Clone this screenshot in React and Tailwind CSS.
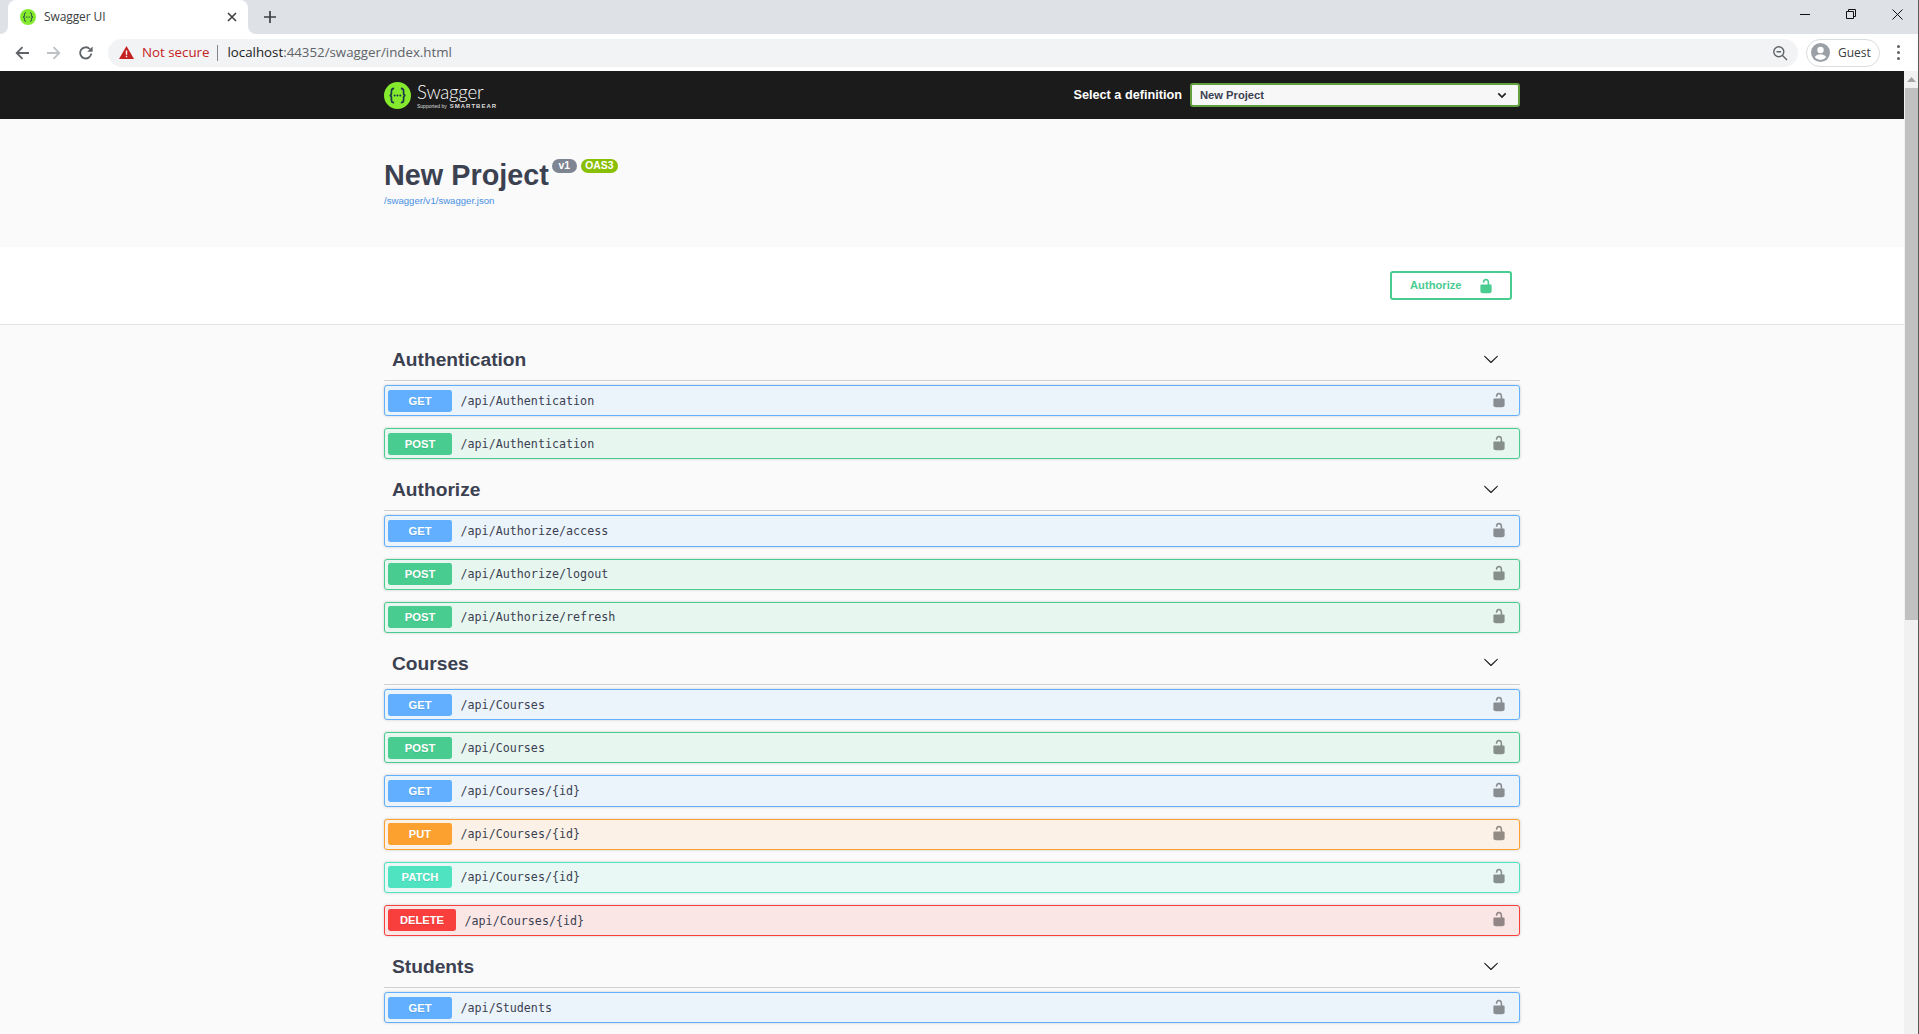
import React from "react";

const LOCK = "M15.8 8H14V5.6C14 2.703 12.665 1 10 1 7.334 1 6 2.703 6 5.6V6h2v-.801C8 3.754 8.797 3 10 3c1.203 0 2 .754 2 2.199V8H4c-.553 0-1 .646-1 1.199V17c0 .549.428 1.139.951 1.307l1.197.387C5.672 18.861 6.55 19 7.1 19h5.8c.549 0 1.428-.139 1.951-.307l1.196-.387c.524-.167.953-.757.953-1.306V9.199C17 8.646 16.352 8 15.8 8z";
const CHEVRON = "M17.418 6.109c.272-.268.709-.268.979 0s.271.701 0 .969l-7.908 7.83c-.27.268-.707.268-.979 0l-7.908-7.83c-.27-.268-.27-.701 0-.969.271-.268.709-.268.979 0L10 13.25l7.418-7.141z";

const styles = {
  GET: { row: "bg-[#ebf3fb] border-[#61affe]", badge: "bg-[#61affe] w-[64px]" },
  POST: { row: "bg-[#e8f6f0] border-[#49cc90]", badge: "bg-[#49cc90] w-[64px]" },
  PUT: { row: "bg-[#fbf1e6] border-[#fca130]", badge: "bg-[#fca130] w-[64px]" },
  PATCH: { row: "bg-[#e9f8f5] border-[#50e3c2]", badge: "bg-[#50e3c2] w-[64px]" },
  DELETE: { row: "bg-[#fbe6e6] border-[#f93e3e]", badge: "bg-[#f93e3e] w-[68px]" },
};

const groups = [
  { name: "Authentication", ops: [["GET", "/api/Authentication"], ["POST", "/api/Authentication"]] },
  { name: "Authorize", ops: [["GET", "/api/Authorize/access"], ["POST", "/api/Authorize/logout"], ["POST", "/api/Authorize/refresh"]] },
  { name: "Courses", ops: [["GET", "/api/Courses"], ["POST", "/api/Courses"], ["GET", "/api/Courses/{id}"], ["PUT", "/api/Courses/{id}"], ["PATCH", "/api/Courses/{id}"], ["DELETE", "/api/Courses/{id}"]] },
  { name: "Students", ops: [["GET", "/api/Students"]] },
];

function Favicon({ size, cls }) {
  return (
    <svg width={size} height={size} viewBox="0 0 32 32" className={cls}>
      <circle cx="16" cy="16" r="16" fill="#85ea2d" />
      <path d="M12 7.5c-2.5 0-3.2 1.2-3.2 3.2v2.6c0 1.6-.8 2.7-2.3 2.7 1.5 0 2.3 1.1 2.3 2.7v2.6c0 2 .7 3.2 3.2 3.2M20 7.5c2.5 0 3.2 1.2 3.2 3.2v2.6c0 1.6.8 2.7 2.3 2.7-1.5 0-2.3 1.1-2.3 2.7v2.6c0 2-.7 3.2-3.2 3.2" fill="none" stroke="#173647" strokeWidth="2" />
      <circle cx="12.6" cy="16" r="1.2" fill="#173647" />
      <circle cx="16" cy="16" r="1.2" fill="#173647" />
      <circle cx="19.4" cy="16" r="1.2" fill="#173647" />
    </svg>
  );
}

function TabBar() {
  return (
    <div className="h-[34px] bg-[#dee1e6] flex items-end relative shrink-0">
      <div className="w-2 h-2 bg-white self-end">
        <div className="w-2 h-2 bg-[#dee1e6] rounded-br-lg" />
      </div>
      <div className="w-[240px] h-[34px] bg-white rounded-t-lg flex items-center pl-3 pr-[10px]">
        <Favicon size={16} />
        <span className="ml-2 flex-1 text-[12px] text-[#3c4043] font-['Open_Sans',sans-serif] tracking-[-0.1px]">Swagger UI</span>
        <svg width="12" height="12" viewBox="0 0 12 12"><path d="M2 2l8 8M10 2l-8 8" stroke="#3c4043" strokeWidth="1.6" fill="none" /></svg>
      </div>
      <div className="w-2 h-2 bg-white self-end">
        <div className="w-2 h-2 bg-[#dee1e6] rounded-bl-lg" />
      </div>
      <svg width="14" height="14" viewBox="0 0 14 14" className="ml-[7px] mb-[10px]"><path d="M7 1v12M1 7h12" stroke="#3c4043" strokeWidth="1.7" fill="none" /></svg>
      <div className="flex-1" />
      <div className="flex items-center h-[34px] pb-[6px] mr-[15px] gap-[36px]">
        <svg width="10" height="10" viewBox="0 0 10 10"><path d="M0 5.5h10" stroke="#111" strokeWidth="1" fill="none" /></svg>
        <svg width="10" height="10" viewBox="0 0 10 10"><path d="M.5 2.5h7v7h-7zM2.5 2.5v-2h7v7h-2" stroke="#111" strokeWidth="1" fill="none" /></svg>
        <svg width="11" height="11" viewBox="0 0 11 11"><path d="M.5.5l10 10M10.5.5l-10 10" stroke="#111" strokeWidth="1" fill="none" /></svg>
      </div>
    </div>
  );
}

function Toolbar() {
  return (
    <div className="h-[37px] bg-white flex items-center shrink-0 pl-[15px] pr-[15px] font-['Open_Sans',sans-serif]">
      <svg width="14" height="14" viewBox="0 0 14 14"><path d="M14 7H2M7.5 1.2L1.7 7l5.8 5.8" stroke="#5f6368" strokeWidth="1.8" fill="none" /></svg>
      <svg width="14" height="14" viewBox="0 0 14 14" className="ml-[18px]"><path d="M0 7h12M6.5 1.2L12.3 7l-5.8 5.8" stroke="#bdc1c6" strokeWidth="1.8" fill="none" /></svg>
      <svg width="16" height="16" viewBox="0 0 16 16" className="ml-[17px]"><path d="M13.3 8.5A5.6 5.6 0 1 1 11.8 4" stroke="#5f6368" strokeWidth="1.8" fill="none" /><path d="M14.6 1.4v5.4H9.2z" fill="#5f6368" /></svg>
      <div className="ml-[14px] w-[1690px] h-[28px] rounded-full bg-[#f1f3f4] flex items-center pl-[11px] pr-[10px]">
        <svg width="15" height="13" viewBox="0 0 15 13"><path d="M7.5 0L15 13H0z" fill="#c5221f" /><path d="M6.8 4.5h1.4v4.3H6.8zM6.8 9.8h1.4v1.4H6.8z" fill="#fff" /></svg>
        <span className="ml-[8px] text-[13.3px] text-[#c5221f] leading-none">Not secure</span>
        <span className="ml-[8px] w-px h-[16px] bg-[#80868b]" />
        <span className="ml-[9px] text-[13.3px] leading-none text-[#202124]">localhost<span className="text-[#5f6368]">:44352/swagger/index.html</span></span>
        <span className="flex-1" />
        <svg width="16" height="16" viewBox="0 0 16 16"><circle cx="6.8" cy="6.8" r="5" stroke="#5f6368" strokeWidth="1.4" fill="none" /><path d="M4.5 6.8h4.6M10.5 10.5l4.5 4.5" stroke="#5f6368" strokeWidth="1.4" fill="none" /></svg>
      </div>
      <div className="ml-[8px] w-[74px] h-[28px] rounded-full border border-[#dadce0] flex items-center pl-[4px]">
        <svg width="19" height="19" viewBox="0 0 19 19"><circle cx="9.5" cy="9.5" r="9.5" fill="#9aa0a6" /><circle cx="9.5" cy="7" r="3.2" fill="#fff" /><path d="M3.8 14.2c1.2-2 3.4-2.9 5.7-2.9s4.5.9 5.7 2.9a7.4 7.4 0 0 1-11.4 0z" fill="#fff" /></svg>
        <span className="ml-[8px] text-[12px] text-[#3c4043] leading-none">Guest</span>
      </div>
      <div className="ml-[17px] flex flex-col gap-[3px]">
        <span className="w-[3px] h-[3px] rounded-full bg-[#5f6368]" />
        <span className="w-[3px] h-[3px] rounded-full bg-[#5f6368]" />
        <span className="w-[3px] h-[3px] rounded-full bg-[#5f6368]" />
      </div>
    </div>
  );
}

function Header() {
  return (
    <div className="h-[48px] bg-[#1b1b1b] flex justify-center shrink-0">
      <div className="w-[1136px] flex items-center">
        <Favicon size={27} />
        <div className="ml-[6px] flex flex-col text-white mt-[2px]">
          <span className="text-[18.6px] leading-[21px] font-light font-['Lato',sans-serif] tracking-[-0.2px]">Swagger</span>
          <span className="text-[5px] leading-[7px] flex items-center gap-[3px] text-[#ddd] whitespace-nowrap">Supported by <span className="text-[6px] font-bold tracking-[1px]">SMARTBEAR</span></span>
        </div>
        <div className="flex-1" />
        <span className="text-[12.7px] font-bold leading-none text-white mr-[8px]">Select a definition</span>
        <div className="w-[330px] h-[24px] rounded-[3px] border-2 border-[#62a03f] bg-[#f7f7f7] flex items-center justify-between pl-[8px] pr-[11px]">
          <span className="text-[11.2px] font-bold text-[#3b4151]">New Project</span>
          <svg width="10" height="7" viewBox="0 0 10 7"><path d="M1.3 1.3L5 5l3.7-3.7" stroke="#222" strokeWidth="1.7" fill="none" /></svg>
        </div>
      </div>
    </div>
  );
}

function Info() {
  return (
    <div className="h-[128px] shrink-0 bg-[#fafafa] flex justify-center">
      <div className="w-[1136px] pt-[37px]">
        <div className="flex items-start h-[38px]">
          <h1 className="text-[28.8px] font-bold text-[#3b4151] leading-[38px]">New Project</h1>
          <span className="ml-[3px] mt-[3px] h-[14px] w-[25px] rounded-full bg-[#7d8492] text-white text-[10.4px] font-bold leading-[14px] text-center">v1</span>
          <span className="ml-[4px] mt-[3px] h-[14px] w-[37px] rounded-full bg-[#89bf04] text-white text-[10.4px] font-bold leading-[14px] text-center">OAS3</span>
        </div>
        <div className="text-[9.6px] text-[#4990e2] leading-[12px] mt-[1px]">/swagger/v1/swagger.json</div>
      </div>
    </div>
  );
}

function Scheme() {
  return (
    <div className="h-[78px] shrink-0 bg-white border-b border-[#e2e2e2] flex justify-center">
      <div className="w-[1136px] flex justify-end items-start pt-[24px] pr-[8px]">
        <div className="w-[122px] h-[29px] rounded-[3px] border-2 border-[#49cc90] flex items-center pl-[18px]">
          <span className="text-[11.2px] font-bold text-[#49cc90]">Authorize</span>
          <svg width="16" height="16" viewBox="0 0 20 20" className="ml-[16px]" fill="#49cc90"><path d={LOCK} /></svg>
        </div>
      </div>
    </div>
  );
}

function Row({ method, path }) {
  const s = styles[method];
  return (
    <div className={`h-[31.2px] mb-[12px] rounded-[3px] border flex items-center pl-[3px] pr-[12px] shadow-[0_0_3px_rgba(0,0,0,0.19)] ${s.row}`}>
      <span className={`h-[22px] rounded-[2.4px] text-white text-[11.2px] font-bold text-center leading-[22px] shrink-0 [text-shadow:0_1px_0_rgba(0,0,0,0.1)] ${s.badge}`}>{method}</span>
      <span className="ml-[8.5px] flex-1 text-[11.7px] leading-none pt-[2px] text-[#3b4151] font-['DejaVu_Sans_Mono',monospace]">{path}</span>
      <svg width="16" height="16" viewBox="0 0 20 20" fill="#000" fillOpacity="0.42" className="mb-[2px]"><path d={LOCK} /></svg>
    </div>
  );
}

function Group({ name, ops }) {
  return (
    <div>
      <div className="h-[40px] mb-[4px] border-b border-[#cfd0d3] flex items-center justify-between pl-[8px] pr-[21px] pb-[1px]">
        <h3 className="text-[19.2px] font-bold text-[#3b4151]">{name}</h3>
        <svg width="16" height="16" viewBox="0 0 20 20" fill="#222" className="mb-[3px]"><path d={CHEVRON} /></svg>
      </div>
      {ops.map(([m, p], i) => <Row key={i} method={m} path={p} />)}
    </div>
  );
}

function Scrollbar() {
  return (
    <div className="w-[14px] bg-[#f1f1f1] flex flex-col items-center shrink-0">
      <div className="h-[17px] flex items-center justify-center">
        <svg width="9" height="5" viewBox="0 0 9 5"><path d="M4.5 0L9 5H0z" fill="#a3a3a3" /></svg>
      </div>
      <div className="w-[13px] self-end h-[532px] bg-[#c1c1c1]" />
    </div>
  );
}

export default function App() {
  return (
    <div className="h-screen w-full overflow-hidden flex flex-col border-r border-[#5a5a5a] font-['Liberation_Sans',Arial,sans-serif] bg-white">
      <TabBar />
      <Toolbar />
      <div className="flex flex-1 min-h-0">
        <div className="flex-1 min-w-0 overflow-hidden flex flex-col bg-[#fafafa]">
          <Header />
          <Info />
          <Scheme />
          <div className="flex justify-center shrink-0">
            <div className="w-[1136px] pt-[16px]">
              {groups.map((g) => <Group key={g.name} name={g.name} ops={g.ops} />)}
            </div>
          </div>
        </div>
        <Scrollbar />
      </div>
    </div>
  );
}
